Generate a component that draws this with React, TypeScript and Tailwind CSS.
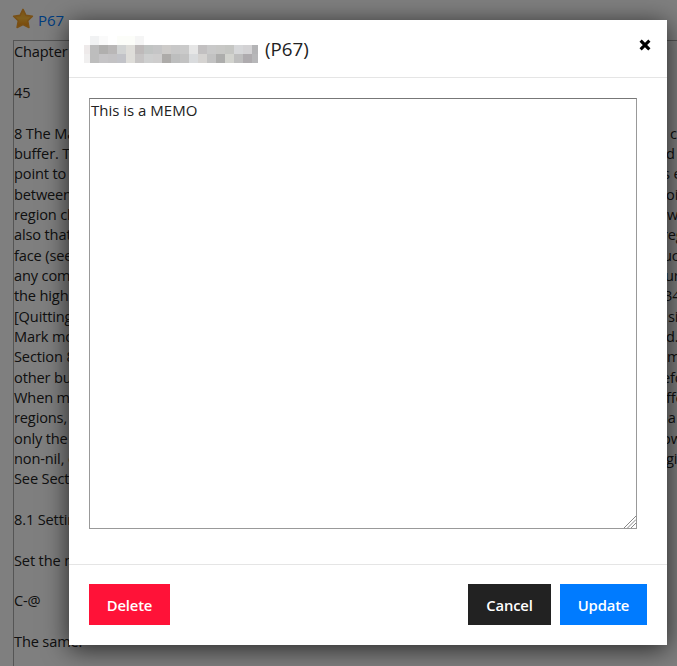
const rows: [string, string, string][] = [
  ["Chapter 8: The Mark and the Region", "", ""],
  ["", "", ""],
  ["45", "", ""],
  ["", "", ""],
  ["8 The Mark", "c", "ml-[3px]"],
  ["buffer. To", "d", "-ml-px"],
  ["point to", "s e", "-ml-[4px]"],
  ["between", "oi", "-ml-px"],
  ["region ch", "w", "ml-0"],
  ["also that", "reg", "-ml-[5px]"],
  ["face (see", "uc", "-ml-[4px]"],
  ["any comm", "ur", "-ml-[2px]"],
  ["the highl", "34", "-ml-[3px]"],
  ["[Quitting", "si", "ml-px"],
  ["Mark mo", "d.", "-ml-px"],
  ["Section 8", "m", "ml-0"],
  ["other buf", "efo", "-ml-[5px]"],
  ["When mu", "ffe", "-ml-px"],
  ["regions,", "ha", "-ml-[8px]"],
  ["only the", "ow", "-ml-[5px]"],
  ["non-nil, e", "gi", "-ml-px"],
  ["See Secti", "", ""],
  ["", "", ""],
  ["8.1 Settin", "", ""],
  ["", "", ""],
  ["Set the m", "", ""],
  ["", "", ""],
  ["C-@", "", ""],
  ["", "", ""],
  ["The same.", "", ""],
];

const mosaic = [
  ["bg-white", "bg-[#f1f2f3]", "bg-[#fafafa]", "bg-white", "bg-[#fcfdf9]", "bg-[#fcfdf9]", "bg-[#f5f5f5]", "bg-white", "bg-white", "bg-white", "bg-white", "bg-white", "bg-white", "bg-white", "bg-white", "bg-white", "bg-white", "bg-white", "bg-white", "bg-white"],
  ["bg-[#eeeaea]", "bg-[#bdbdbd]", "bg-[#b0afae]", "bg-[#b9b7b7]", "bg-[#d1d3d3]", "bg-[#deddd9]", "bg-[#bebaba]", "bg-[#c1c4c3]", "bg-[#c5c5c6]", "bg-[#cdcbc9]", "bg-[#c8c8c8]", "bg-[#cacaca]", "bg-[#e6e6e6]", "bg-[#c2c0c1]", "bg-[#c9c9c9]", "bg-[#c8c8c6]", "bg-[#c5c6c3]", "bg-[#d6d7d9]", "bg-[#d3d2d4]", "bg-[#b4b4b6]"],
  ["bg-[#f0efef]", "bg-[#bdbdbd]", "bg-[#c5c4c6]", "bg-[#c3c2c4]", "bg-[#c2c3c8]", "bg-[#deddd9]", "bg-[#c6c4c4]", "bg-[#cecfcf]", "bg-[#cecdcd]", "bg-[#adaba9]", "bg-[#bdbebe]", "bg-[#c2c2c2]", "bg-[#d9dbdd]", "bg-[#d5d3d1]", "bg-[#c2c2c2]", "bg-[#adadac]", "bg-[#d2d3ce]", "bg-[#bebebe]", "bg-[#aeabae]", "bg-[#b7b7b9]"],
];

export default function App() {
  return (
    <div className="relative h-[666px] w-[677px] overflow-hidden bg-white font-['Open_Sans','Noto_Sans',sans-serif] text-[15px] text-[#222]">
      <div className="flex h-10 items-center pb-[2px] pl-3">
        <svg width="22" height="22" viewBox="0 0 22 22" aria-hidden="true">
          <defs>
            <linearGradient id="star" x1="0" y1="0" x2="0" y2="1">
              <stop offset="0" stopColor="#f5a52a" />
              <stop offset="0.5" stopColor="#ffbd3a" />
              <stop offset="1" stopColor="#f48a0c" />
            </linearGradient>
          </defs>
          <path d="M11 1.4 13.9 7.4 20.4 8.2 15.7 12.8 16.9 19.5 11 16.5 5.1 19.5 6.3 12.8 1.6 8.2 8.1 7.4Z" fill="url(#star)" stroke="#f2a02c" strokeWidth="1.6" strokeLinejoin="round" />
        </svg>
        <a className="ml-1 pt-[3px] text-[#007bff]">P67</a>
      </div>
      <div className="ml-[13px] h-[640px] w-[700px] border border-[#aaa] pt-[0.4px] text-[14.6px] tracking-[-0.15px]">
        {rows.map(([left, right, shift], i) => (
          <div key={i} className="flex h-[20.34px] whitespace-pre leading-[20.34px]">
            <span className="w-[653px] shrink-0">{left}</span>
            <span className={shift}>{right}</span>
          </div>
        ))}
      </div>

      <div className="absolute inset-0 bg-black/50 pl-[69px] pt-5">
        <section role="dialog" className="flex h-[625px] w-[598px] flex-col bg-white shadow-[0_4px_24px_rgba(0,0,0,0.7)]">
          <header className="flex h-[58px] shrink-0 items-center border-b border-[#e5e5e5] pl-[15px]">
            <div className="flex flex-col pt-[2px]">
              {mosaic.map((line, r) => (
                <div key={r} className="flex h-[9px]">
                  {line.map((color, c) => (
                    <span key={c} className={`${c === 0 || c === 19 ? "w-[6px]" : "w-[9px]"} ${color}`} />
                  ))}
                </div>
              ))}
            </div>
            <h1 className="ml-[7px] pt-px text-[18.75px]">(P67)</h1>
            <button className="ml-auto mr-4 mb-2 flex h-3 w-3 items-center justify-center" aria-label="Close">
              <svg width="12" height="12" viewBox="0 0 12 12">
                <path d="M2.7 2.7 9.3 9.3M9.3 2.7 2.7 9.3" stroke="#000" strokeWidth="3.1" strokeLinecap="square" />
              </svg>
            </button>
          </header>
          <div className="flex-1 px-5 pt-5">
            <div className="flex h-[431px] w-[548px] flex-col border border-[#999] border-t-[#777] pl-px pt-px">
              <span className="leading-5">This is a MEMO</span>
              <svg className="ml-auto mt-auto" width="12" height="12" viewBox="0 0 12 12" fill="none" stroke="#888">
                <path d="M0 12 12 0M3.5 12 12 3.5M7 12 12 7" />
              </svg>
            </div>
          </div>
          <footer className="flex h-[81px] shrink-0 items-start border-t border-[#e5e5e5] px-5 pt-[19px] text-[14.8px] font-semibold tracking-[-0.15px] text-white">
            <button className="h-[41px] w-[81px] bg-[#ff1238] pt-0.5">Delete</button>
            <button className="ml-auto h-[41px] w-[83px] bg-[#222] pt-0.5">Cancel</button>
            <button className="ml-[9px] h-[41px] w-[87px] bg-[#007bff] pt-0.5">Update</button>
          </footer>
        </section>
      </div>
    </div>
  );
}
